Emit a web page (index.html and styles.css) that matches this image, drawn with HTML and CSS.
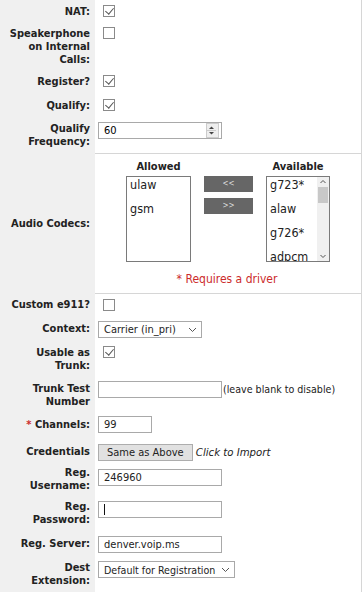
FILE: index.html
```html
<!DOCTYPE html>
<html>

<head>
    <meta charset="UTF-8">
    <title>Trunk Settings</title>
    <link rel="stylesheet" href="styles.css">
</head>

<body>
    <table class="settings">
        <tr class="r-nat">
            <th>NAT:</th>
            <td><input type="checkbox" checked></td>
        </tr>
        <tr class="r-speaker">
            <th>Speakerphone on Internal Calls:</th>
            <td><input type="checkbox"></td>
        </tr>
        <tr class="r-register">
            <th>Register?</th>
            <td><input type="checkbox" checked></td>
        </tr>
        <tr class="r-qualify">
            <th>Qualify:</th>
            <td><input type="checkbox" checked></td>
        </tr>
        <tr class="r-freq">
            <th>Qualify Frequency:</th>
            <td>
                <div class="number-box">
                    <input type="text" value="60">
                    <span class="spinner">
                        <svg width="9" height="13" viewBox="0 0 9 13">
                            <path d="M2 5 L4.5 2.5 L7 5 Z" fill="#444" />
                            <path d="M2 8 L4.5 10.5 L7 8 Z" fill="#444" />
                            <line x1="0" y1="6.5" x2="9" y2="6.5" stroke="#ccc" />
                        </svg>
                    </span>
                </div>
            </td>
        </tr>
        <tr class="r-codecs">
            <th class="mid">Audio Codecs:</th>
            <td>
                <div class="codecs">
                    <div class="codec-col">
                        <div class="codec-title">Allowed</div>
                        <div class="listbox allowed">
                            <div class="opt">ulaw</div>
                            <div class="opt">gsm</div>
                        </div>
                    </div>
                    <div class="codec-buttons">
                        <button class="move-btn">&lt;&lt;</button>
                        <button class="move-btn">&gt;&gt;</button>
                    </div>
                    <div class="codec-col">
                        <div class="codec-title">Available</div>
                        <div class="listbox available">
                            <div class="opts">
                                <div class="opt">g723*</div>
                                <div class="opt">alaw</div>
                                <div class="opt">g726*</div>
                                <div class="opt">adpcm</div>
                            </div>
                            <div class="scrollbar">
                                <svg width="12" height="10" viewBox="0 0 12 10">
                                    <path d="M3.5 6 L6 3.5 L8.5 6" fill="none" stroke="#555" stroke-width="1" />
                                </svg>
                                <span class="thumb"></span>
                                <span class="track"></span>
                                <svg width="12" height="10" viewBox="0 0 12 10">
                                    <path d="M3.5 4 L6 6.5 L8.5 4" fill="none" stroke="#555" stroke-width="1" />
                                </svg>
                            </div>
                        </div>
                    </div>
                </div>
                <div class="driver-note">* Requires a driver</div>
            </td>
        </tr>
        <tr class="r-e911">
            <th>Custom e911?</th>
            <td><input type="checkbox"></td>
        </tr>
        <tr class="r-context">
            <th>Context:</th>
            <td>
                <span class="select-wrap ctx">
                    <select>
                        <option>Carrier (in_pri)</option>
                    </select>
                    <svg class="chev" width="9" height="6" viewBox="0 0 9 6">
                        <path d="M1 1 L4.5 4.5 L8 1" fill="none" stroke="#555" />
                    </svg>
                </span>
            </td>
        </tr>
        <tr class="r-usable">
            <th>Usable as Trunk:</th>
            <td><input type="checkbox" checked></td>
        </tr>
        <tr class="r-trunk">
            <th>Trunk Test Number</th>
            <td><input type="text" class="text wide"><span class="hint">(leave blank to disable)</span></td>
        </tr>
        <tr class="r-channels">
            <th><span class="req">*</span> Channels:</th>
            <td><input type="text" class="text short" value="99"></td>
        </tr>
        <tr class="r-creds">
            <th>Credentials</th>
            <td><button class="same-btn">Same as Above</button> <em class="import">Click to Import</em></td>
        </tr>
        <tr class="r-user">
            <th>Reg. Username:</th>
            <td><input type="text" class="text wide" value="246960"></td>
        </tr>
        <tr class="r-pass">
            <th>Reg. Password:</th>
            <td><input type="text" class="text wide caret"></td>
        </tr>
        <tr class="r-server">
            <th>Reg. Server:</th>
            <td><input type="text" class="text wide" value="denver.voip.ms"></td>
        </tr>
        <tr class="r-dest">
            <th>Dest Extension:</th>
            <td>
                <span class="select-wrap dest">
                    <select>
                        <option>Default for Registration</option>
                    </select>
                    <svg class="chev" width="9" height="6" viewBox="0 0 9 6">
                        <path d="M1 1 L4.5 4.5 L8 1" fill="none" stroke="#555" />
                    </svg>
                </span>
            </td>
        </tr>
    </table>
</body>

</html>
```

FILE: styles.css
```css
body {
    margin: 0;
    background: #fff;
    font-family: "DejaVu Sans Condensed", "DejaVu Sans", sans-serif;
    font-size: 11px;
    color: #222;
}

.settings {
    width: 362px;
    border-collapse: collapse;
    border-right: 1px solid #d6d6d6;
}

.settings th {
    width: 85px;
    background: #f0f0f0;
    text-align: right;
    vertical-align: top;
    font-weight: bold;
    line-height: 13px;
    padding: 5px;
    color: #222;
}

.settings th.mid {
    vertical-align: middle;
}

.settings td {
    vertical-align: top;
    padding: 5px 3px;
    line-height: 13px;
}

/* row spacing, per row */
.r-nat th, .r-nat td { padding-top: 5px; padding-bottom: 4px; }
.r-speaker th, .r-speaker td { padding-top: 5px; padding-bottom: 5px; }
.r-register th, .r-register td { padding-top: 4px; padding-bottom: 6px; }
.r-qualify th, .r-qualify td { padding-top: 5px; padding-bottom: 5px; }
.r-freq th { padding-top: 5px; padding-bottom: 5px; }
.r-freq td { padding-top: 5px; padding-bottom: 0; }
.r-e911 th, .r-e911 td { padding-top: 5px; padding-bottom: 5px; }
.r-context th { padding-top: 6px; padding-bottom: 0; }
.r-context td { padding-top: 5px; padding-bottom: 3px; }
.r-usable th, .r-usable td { padding-top: 5px; padding-bottom: 5px; }
.r-trunk th { padding-top: 5px; padding-bottom: 5px; }
.r-trunk td { padding-top: 4px; padding-bottom: 0; }
.r-channels th { padding-top: 5px; padding-bottom: 0; }
.r-channels td { padding-top: 3px; padding-bottom: 7px; }
.r-creds th { padding-top: 5px; padding-bottom: 0; }
.r-creds td { padding-top: 4px; padding-bottom: 1px; }
.r-user th { padding-top: 4px; padding-bottom: 3px; }
.r-user td { padding-top: 7px; padding-bottom: 0; }
.r-pass th { padding-top: 5px; padding-bottom: 6px; }
.r-pass td { padding-top: 6px; padding-bottom: 0; }
.r-server th { padding-top: 5px; padding-bottom: 0; }
.r-server td { padding-top: 4px; padding-bottom: 3px; }
.r-dest th { padding-top: 5px; padding-bottom: 5px; }
.r-dest td { padding-top: 5px; padding-bottom: 0; }

.settings input[type=checkbox] {
    appearance: none;
    -webkit-appearance: none;
    width: 12px;
    height: 12px;
    margin: 0 0 0 5px;
    border: 1px solid #8a8a8a;
    background: #fff;
    position: relative;
    display: block;
}

.settings input[type=checkbox]:checked::after {
    content: "";
    position: absolute;
    left: 3px;
    top: 0px;
    width: 4px;
    height: 7px;
    border-right: 1px solid #555;
    border-bottom: 1px solid #555;
    transform: rotate(40deg);
}

.text {
    font-family: inherit;
    font-size: 11px;
    height: 17px;
    box-sizing: border-box;
    border: 1px solid #a9a9a9;
    padding: 0 5px;
    margin: 0;
    color: #222;
    vertical-align: top;
}

.wide {
    width: 124px;
}

.short {
    width: 54px;
}

.caret {
    background: linear-gradient(#111, #111) no-repeat 5px 2px / 1px 11px #fff;
}

.number-box {
    display: flex;
    align-items: center;
    width: 124px;
    height: 17px;
    box-sizing: border-box;
    border: 1px solid #a9a9a9;
}

.number-box input {
    flex: 1;
    min-width: 0;
    border: none;
    font-family: inherit;
    font-size: 11px;
    padding: 0 5px;
    outline: none;
}

.spinner {
    display: flex;
    width: 11px;
    height: 13px;
    margin-right: 2px;
    background: #eee;
    border: 1px solid #ccc;
}

.r-codecs td {
    padding: 6px 0 7px 0;
    border-top: 1px solid #d6d6d6;
    border-bottom: 1px solid #d6d6d6;
}

.codecs {
    display: flex;
    align-items: flex-start;
    padding-left: 31px;
}

.codec-col {
    display: flex;
    flex-direction: column;
    align-items: center;
}

.codec-title {
    font-weight: bold;
    font-size: 11px;
    line-height: 13px;
    margin-bottom: 3px;
}

.listbox {
    border: 1px solid #7a7a7a;
    height: 86px;
    box-sizing: border-box;
    background: #fff;
    font-size: 12.5px;
    overflow: hidden;
}

.allowed {
    width: 65px;
}

.available {
    width: 64px;
    display: flex;
}

.opts {
    flex: 1;
}

.opt {
    height: 24px;
    line-height: 14px;
    padding: 1px 0 0 3px;
    box-sizing: border-box;
}

.scrollbar {
    width: 12px;
    display: flex;
    flex-direction: column;
    background: #f0f0f0;
}

.scrollbar svg {
    display: block;
}

.thumb {
    display: block;
    height: 16px;
    margin: 0 1px;
    background: #c8c8c8;
}

.track {
    flex: 1;
}

.codec-buttons {
    display: flex;
    flex-direction: column;
    gap: 6px;
    padding: 16px 13px 0 13px;
}

.move-btn {
    width: 49px;
    height: 16px;
    border: none;
    background: #666;
    color: #ddd;
    font-family: inherit;
    font-size: 8px;
    padding: 0;
}

.driver-note {
    color: #cc2b2b;
    font-size: 12px;
    line-height: 13px;
    text-align: center;
    margin-top: 11px;
    padding-right: 2px;
}

.select-wrap {
    position: relative;
    display: inline-block;
    vertical-align: top;
}

.select-wrap select {
    display: block;
    appearance: none;
    -webkit-appearance: none;
    height: 17px;
    border: 1px solid #a9a9a9;
    background: #fff;
    font-family: inherit;
    font-size: 11px;
    padding: 0 5px;
    color: #222;
    border-radius: 0;
}

.ctx select {
    width: 104px;
}

.dest select {
    width: 137px;
    font-size: 10.6px;
}

.chev {
    position: absolute;
    right: 5px;
    top: 6px;
}

.hint {
    font-size: 10.6px;
    color: #222;
    margin-left: 1px;
    vertical-align: top;
    line-height: 17px;
}

.req {
    color: #cc2b2b;
}

.same-btn {
    height: 17px;
    border: 1px solid #adadad;
    background: #e1e1e1;
    font-family: inherit;
    font-size: 11px;
    padding: 0 8px;
    color: #222;
    vertical-align: top;
}

.import {
    font-size: 11.3px;
    line-height: 17px;
}
```
